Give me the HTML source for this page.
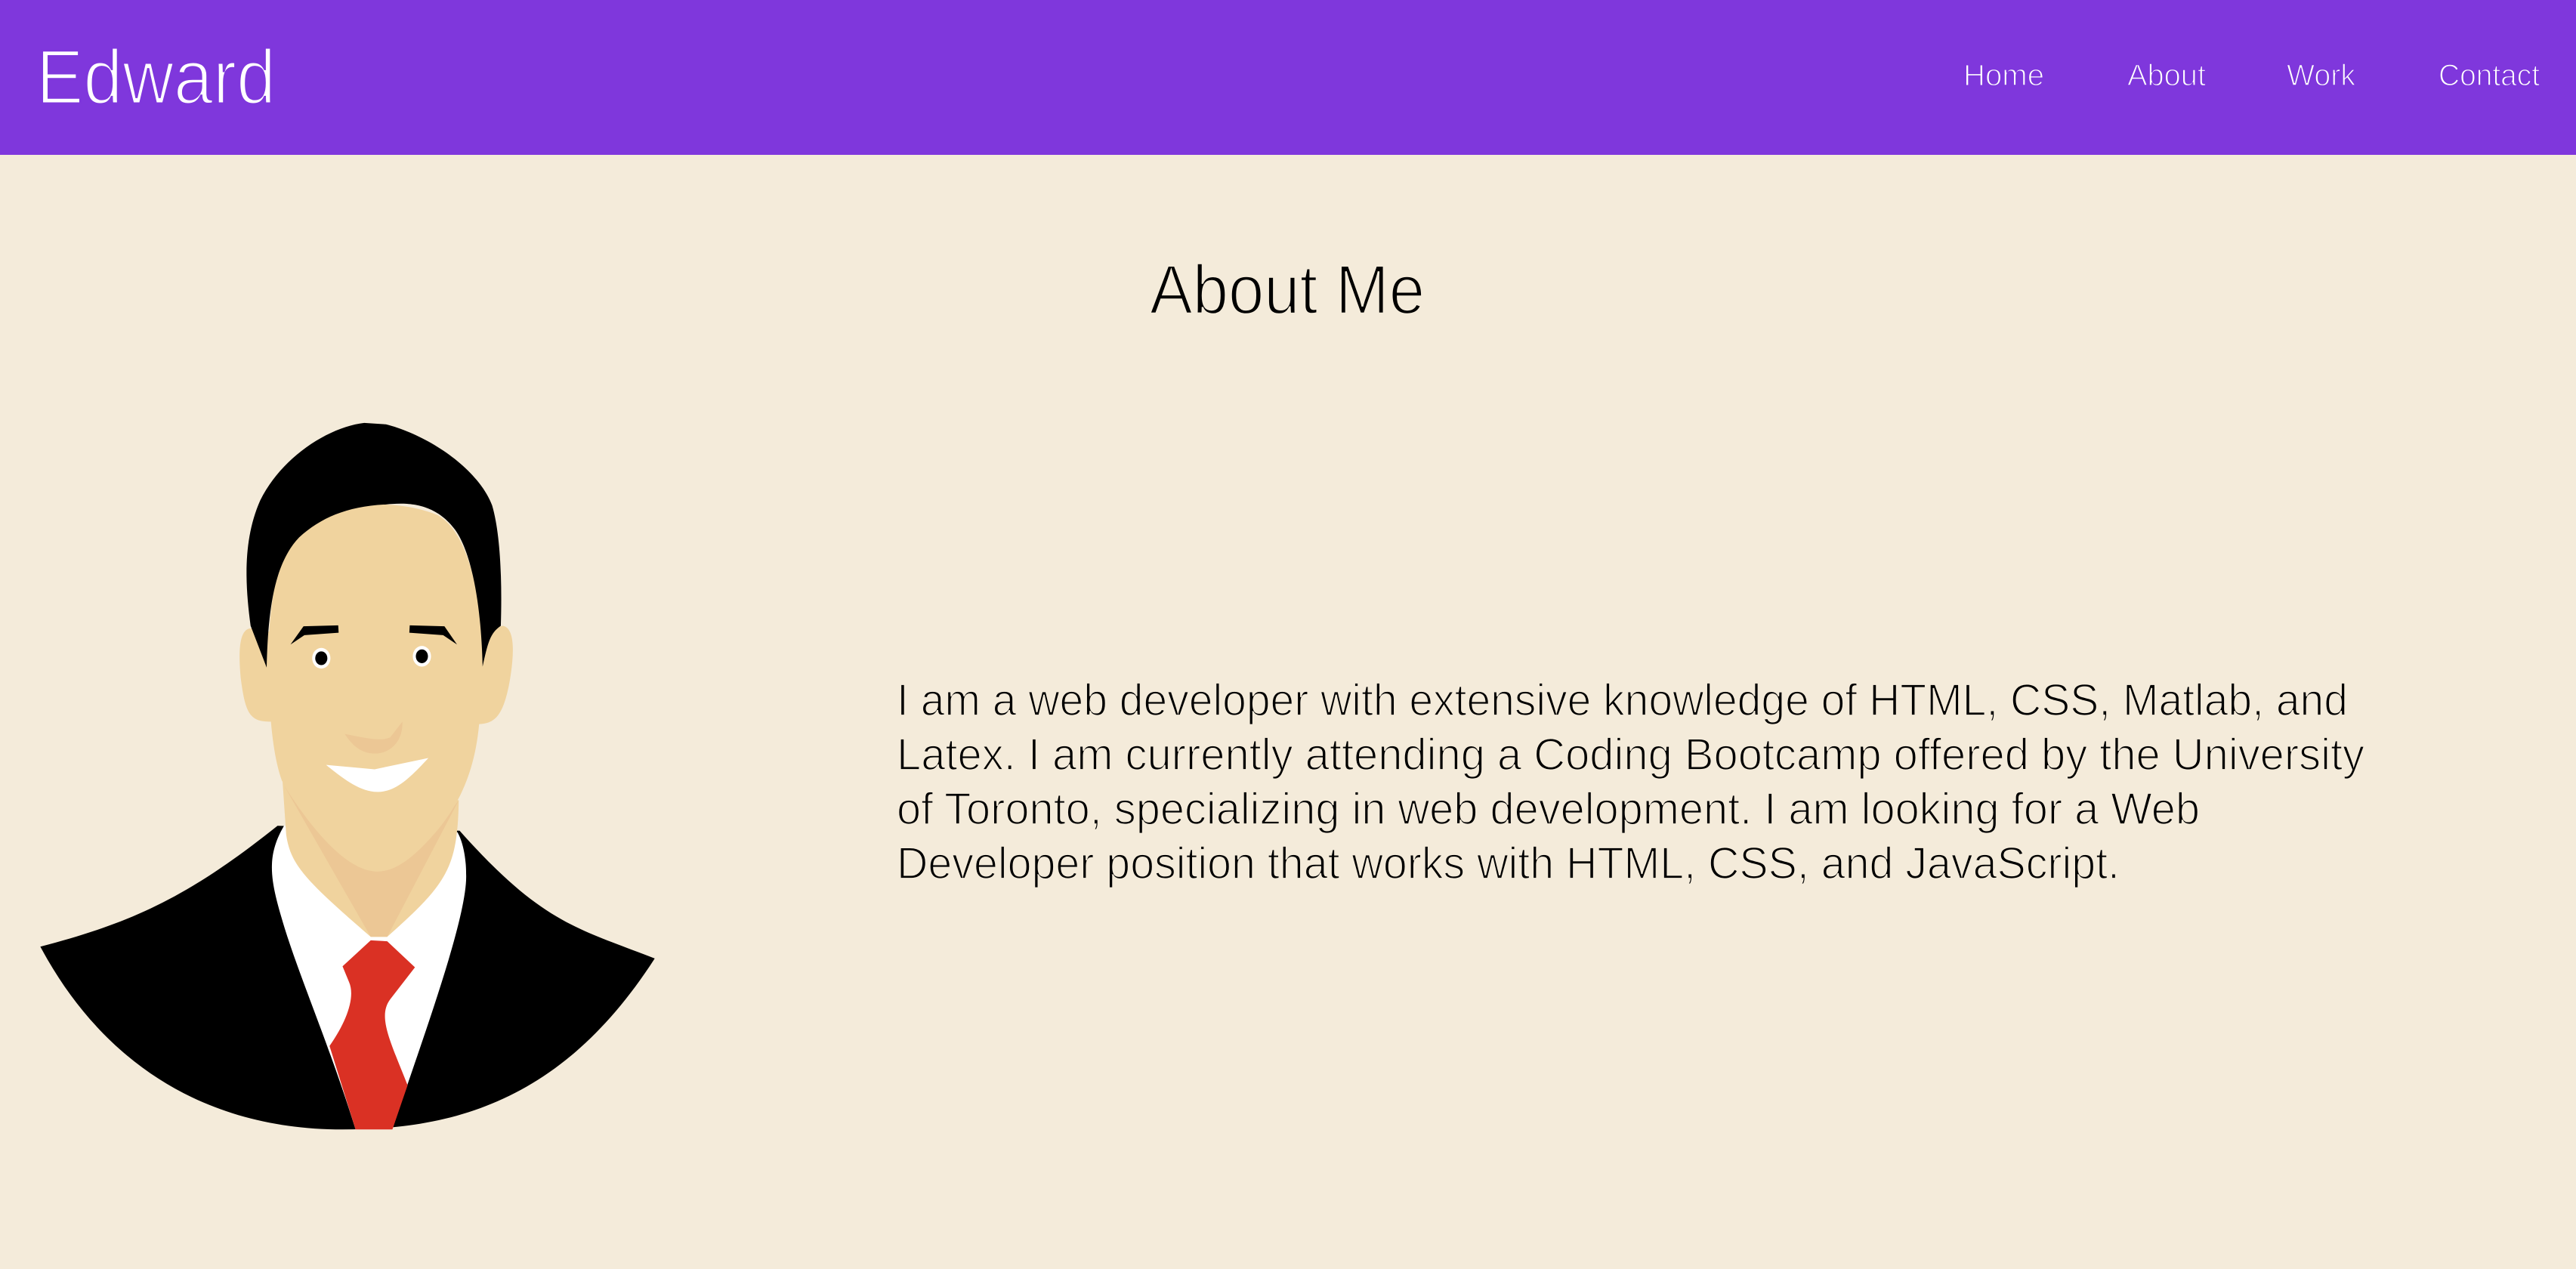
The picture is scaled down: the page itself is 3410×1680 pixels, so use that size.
<!DOCTYPE html>
<html><head><meta charset="utf-8"><style>
html,body{margin:0;padding:0;width:3410px;height:1680px;overflow:hidden;background:#f4ebda;font-family:"Liberation Sans",sans-serif}
svg{position:absolute;left:0;top:0}
</style></head><body>
<svg width="3410" height="1680" viewBox="0 0 3410 1680">
<rect x="0" y="0" width="3410" height="205" fill="#7f37dc"/>
<g font-family="Liberation Sans, sans-serif" fill="#fff" stroke="#7f37dc">
<text x="48" y="137" font-size="102" stroke-width="3" textLength="317" lengthAdjust="spacingAndGlyphs">Edward</text>
<text x="2599" y="113" font-size="40" stroke-width="1.4" textLength="107" lengthAdjust="spacingAndGlyphs">Home</text>
<text x="2816" y="113" font-size="40" stroke-width="1.4" textLength="104" lengthAdjust="spacingAndGlyphs">About</text>
<text x="3027" y="113" font-size="40" stroke-width="1.4" textLength="91" lengthAdjust="spacingAndGlyphs">Work</text>
<text x="3228" y="113" font-size="40" stroke-width="1.4" textLength="134" lengthAdjust="spacingAndGlyphs">Contact</text>
</g>
<g font-family="Liberation Sans, sans-serif" fill="#000" stroke="#f4ebda">
<text x="1522" y="415" font-size="92" stroke-width="2.5" textLength="364" lengthAdjust="spacingAndGlyphs">About Me</text>
<g stroke-width="1.8">
<text x="1187" y="947" font-size="59" textLength="1921" lengthAdjust="spacingAndGlyphs">I am a web developer with extensive knowledge of HTML, CSS, Matlab, and</text>
<text x="1187" y="1019" font-size="59" textLength="1943" lengthAdjust="spacingAndGlyphs">Latex. I am currently attending a Coding Bootcamp offered by the University</text>
<text x="1187" y="1091" font-size="59" textLength="1725" lengthAdjust="spacingAndGlyphs">of Toronto, specializing in web development. I am looking for a Web</text>
<text x="1187" y="1163" font-size="59" textLength="1619" lengthAdjust="spacingAndGlyphs">Developer position that works with HTML, CSS, and JavaScript.</text>
</g>
</g>
</svg>
<svg style="left:0;top:500px" width="900" height="1020" viewBox="0 0 1568 1568" preserveAspectRatio="none">
<path d="M93 1158 C300 1110 430 1060 640 912 L1060 922 C1250 1110 1330 1120 1510 1182 C1300 1470 1050 1530 790 1530 C480 1530 240 1400 93 1158 Z" fill="#000"/>
<path d="M655 912 C610 980 625 1030 660 1130 C700 1240 760 1360 820 1530 L905 1530 C960 1380 1080 1100 1075 1010 C1075 970 1065 940 1055 925 Z" fill="#fff"/>
<path d="M855 1145 L893 1147 L957 1200 L900 1265 C870 1300 900 1350 940 1440 L905 1530 L820 1530 L760 1360 C800 1310 820 1260 805 1230 L790 1198 Z" fill="#da3124"/>
<path d="M650 800 L660 930 C670 990 700 1020 855 1138 L893 1138 C1030 1030 1055 1000 1058 860 Z" fill="#f0d39e"/>
<path d="M655 830 L855 1138 L893 1138 L1058 860 C980 950 920 1005 870 1005 C800 1005 720 920 655 830 Z" fill="#ecc795"/>
<path d="M580 510 C550 510 550 560 555 610 C565 680 575 700 620 700 L640 700 L640 520 Z" fill="#f0d39e"/>
<path d="M1160 505 C1190 510 1185 570 1175 620 C1160 690 1140 705 1100 705 L1090 520 Z" fill="#f0d39e"/>
<path d="M618 590 C620 420 650 320 720 280 C800 250 930 250 1010 280 C1090 320 1115 480 1112 590 L1105 705 C1095 800 1060 870 1000 930 C950 980 910 1005 870 1005 C810 1005 720 920 650 820 C630 770 622 700 618 590 Z" fill="#f0d39e"/>
<path d="M578 505 C565 420 560 330 600 250 C650 160 760 100 840 92 L890 95 C980 115 1100 180 1135 260 C1155 320 1158 420 1155 505 C1130 520 1125 540 1113 588 C1110 470 1090 360 1050 310 C1000 250 930 255 890 258 C800 262 740 285 690 325 C630 380 618 480 615 590 Z" fill="#000"/>
<path d="M670 543 L700 506 L780 504 L781 519 L702 524 Z" fill="#000"/>
<path d="M1054 543 L1025 506 L945 504 L944 519 L1022 524 Z" fill="#000"/>
<circle cx="741" cy="571" r="21" fill="#fff"/><circle cx="741" cy="571" r="14" fill="#000"/>
<circle cx="973" cy="567" r="21" fill="#fff"/><circle cx="973" cy="567" r="14" fill="#000"/>
<path d="M795 725 C850 735 880 740 900 732 L928 700 C930 740 900 765 865 765 C830 765 810 745 795 725 Z" fill="#ecc795"/>
<path d="M752 788 L864 797 L988 774 C940 820 910 843 870 843 C830 843 790 815 752 788 Z" fill="#fff"/>
</svg>
</body></html>
